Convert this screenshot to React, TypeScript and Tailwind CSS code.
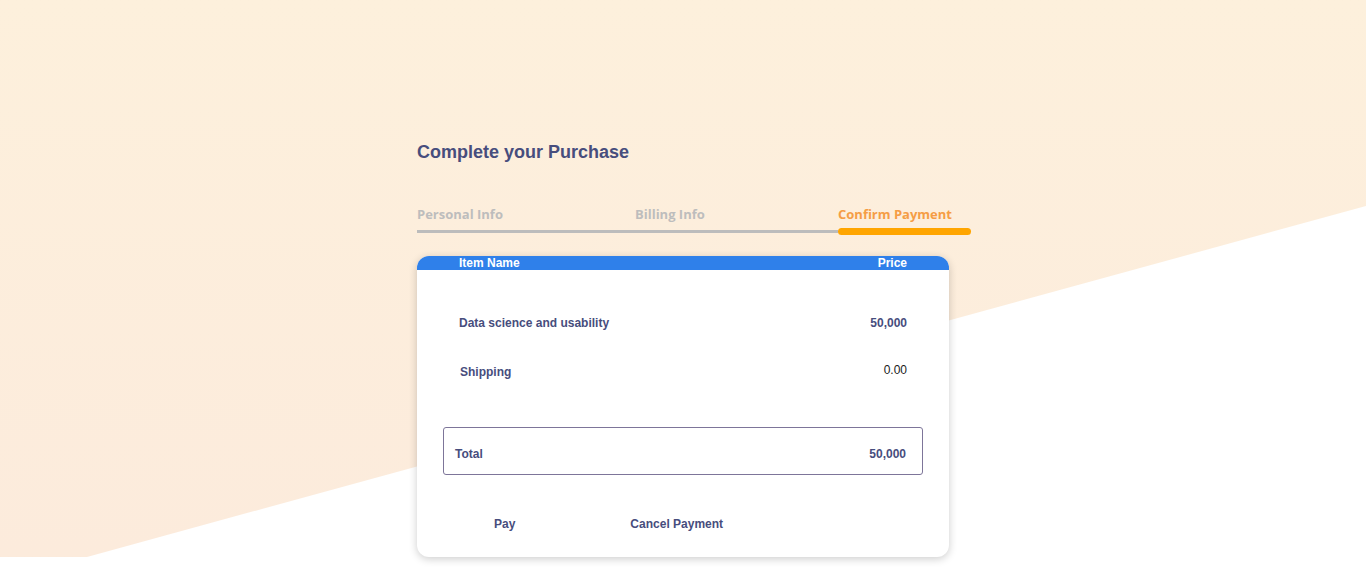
import React from "react";

export default function App() {
  return (
    <div className="relative h-[567px] w-full overflow-hidden bg-white" style={{ fontFamily: '"Liberation Sans", Arial, sans-serif' }}>
      <div
        className="absolute left-0 top-0 h-[557px] w-full bg-gradient-to-b from-[#fdf0dc] to-[#fcebdc]"
        style={{ clipPath: "polygon(0 0, 100% 0, 100% 206px, 87px 557px, 0 557px)" }}
      />
      <div className="relative mx-auto w-[532px] pt-[138px]">
        <h1 className="text-[18px] font-bold leading-[28px] text-[#474d7d]">Complete your Purchase</h1>
        <div className="mt-[38px] w-[554px]" style={{ fontFamily: '"Open Sans", sans-serif' }}>
          <div className="flex text-[13px] font-bold leading-[20px]">
            <div className="w-[218px] text-[#bdbdbd]">Personal Info</div>
            <div className="w-[203px] text-[#bdbdbd]">Billing Info</div>
            <div className="text-[#f59d45]">Confirm Payment</div>
          </div>
          <div className="mt-[4px] flex h-[7px] items-center">
            <div className="h-[3px] w-[421px] bg-[#bcbcbc]" />
            <div className="h-[7px] flex-1 rounded-full bg-[#ffa500]" />
          </div>
        </div>
        <div className="mt-[21px] h-[301px] rounded-[12px] bg-white shadow-[0_2px_8px_rgba(0,0,0,0.2)]">
          <div className="flex h-[14px] items-center justify-between rounded-t-[12px] bg-[#2f80ea] px-[42px] text-[12px] font-bold leading-[14px] text-white">
            <span>Item Name</span>
            <span>Price</span>
          </div>
          <div className="pt-[29px] text-[12px] text-[#474d7d]">
            <div className="flex h-[48px] items-center justify-between px-[42px] font-bold">
              <span>Data science and usability</span>
              <span>50,000</span>
            </div>
            <div className="flex h-[48px] items-center justify-between px-[42px]">
              <span className="ml-[1px] mt-[2px] font-bold">Shipping</span>
              <span className="-mt-[3px] text-[#1b1b1b]">0.00</span>
            </div>
            <div className="mx-[26px] mt-[32px] flex h-[48px] items-center justify-between rounded-[3px] border border-[#7d7599] pl-[11px] pr-[16px] pt-[6px] font-bold">
              <span>Total</span>
              <span>50,000</span>
            </div>
            <div className="mt-[40px] flex items-center font-bold leading-[18px]">
              <button className="ml-[77px] text-[#474d7d]">Pay</button>
              <button className="ml-[115px] text-[#474d7d]">Cancel Payment</button>
            </div>
          </div>
        </div>
      </div>
    </div>
  );
}
